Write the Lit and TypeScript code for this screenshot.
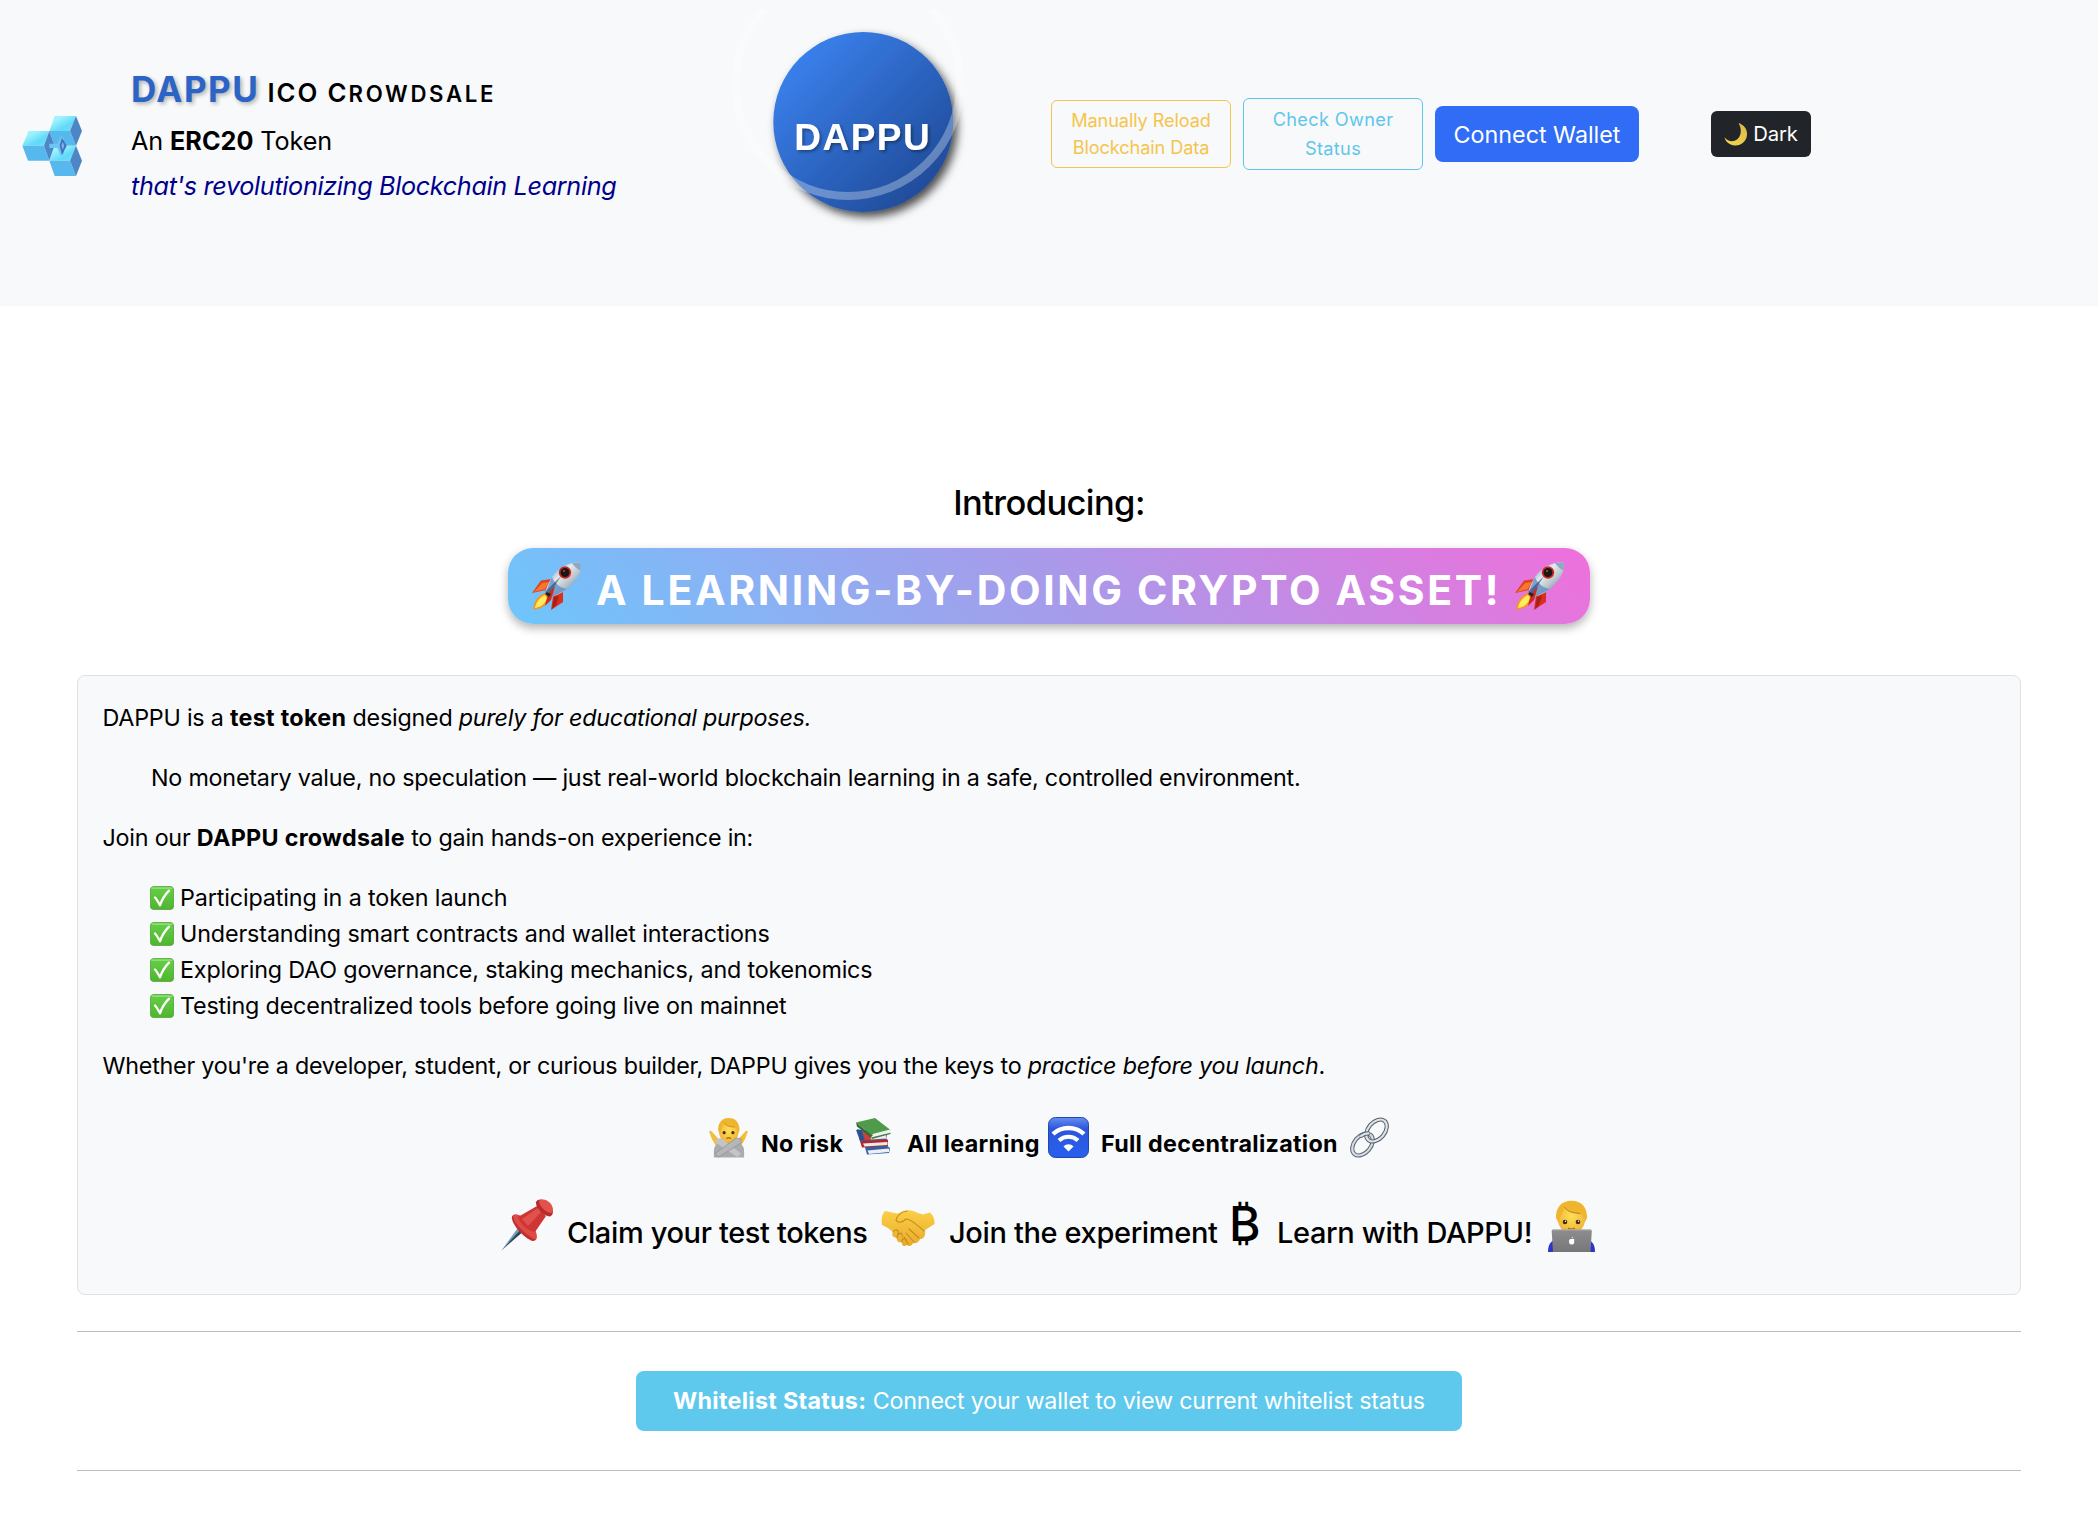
import { LitElement, html, css, svg } from "lit";
import { customElement } from "lit/decorators.js";

const cubes = html`<svg class="cubes" viewBox="36 33 180 180">
  <defs>
    <linearGradient id="face" x1="0" y1="0" x2="1" y2="1"><stop offset="0" stop-color="#8ff0fd"/><stop offset=".25" stop-color="#9ff4fe"/><stop offset=".65" stop-color="#62d9f8"/><stop offset="1" stop-color="#6fe0fb"/></linearGradient>
  </defs>
  <path d="M134 33H198L180 78H118Z" fill="url(#face)"/>
  <path d="M118 78H180L198 122H134Z" fill="#57b8ee"/>
  <path d="M198 33L216 78L198 122L180 78Z" fill="#4c86c6"/>
  <path d="M56 78H118L102 122H37Z" fill="url(#face)"/>
  <path d="M37 122H102L118 167H54Z" fill="#57b8ee"/>
  <path d="M118 78L134 122L118 167L102 122Z" fill="#4c86c6"/>
  <path d="M134 122H198L180 167H118Z" fill="url(#face)"/>
  <path d="M118 167H180L198 213H134Z" fill="#57b8ee"/>
  <path d="M198 122L216 167L198 213L180 167Z" fill="#4c86c6"/>
  <path d="M118 116H142L153 94L162 100V146L153 153L142 129H118Z" fill="#6cc6f2"/>
  <path d="M156 98L170 122L156 150L149 122Z" fill="#4270c0"/>
  <path d="M158 110L163 122L158 134L154 122Z" fill="#7fb0e8"/>
</svg>`;

const coin = html`<svg class="coin" viewBox="732 10 250 230">
  <defs>
    <linearGradient id="coin-fill" x1="0" y1="0" x2="1" y2="1"><stop offset=".1" stop-color="#3b82f0"/><stop offset="1" stop-color="#1b428a"/></linearGradient>
    <filter id="coin-shadow" x="-20%" y="-20%" width="150%" height="150%"><feDropShadow dx="4" dy="5" stdDeviation="5" flood-color="#000" flood-opacity=".7"/></filter>
    <filter id="word-shadow" x="-10%" y="-30%" width="120%" height="170%"><feDropShadow dx="2" dy="2" stdDeviation="1.5" flood-color="#000" flood-opacity=".35"/></filter>
  </defs>
  <circle cx="863.3" cy="122" r="90" fill="url(#coin-fill)" filter="url(#coin-shadow)"/>
  <circle cx="848" cy="84" r="112" fill="none" stroke="#fff" stroke-width="8" opacity=".3"/>
  <text class="coin-word" x="794.3" y="150" filter="url(#word-shadow)">DAPPU</text>
</svg>`;

const moon = html`<svg class="moon" viewBox="0 0 24 24"><defs><linearGradient id="mg" x1="0" y1="1" x2="1" y2="0"><stop offset="0" stop-color="#f9d84f"/><stop offset="1" stop-color="#d9b94a"/></linearGradient></defs>
  <path d="M14.5 1C20 3 23.5 7 23 13C22.5 19.5 17 23.8 11 23.5C6 23 1.500 20 .5 15.500C4 19.500 9 20.300 13 17.500C17.500 14 18 6.500 14.500 1Z" fill="url(#mg)"/></svg>`;

const rocket = html`<svg class="rocket" viewBox="0 0 50 48">
  <defs><linearGradient id="rk" x1="0" y1="0" x2="1" y2="1"><stop offset=".1" stop-color="#5d8fc8"/><stop offset=".4" stop-color="#e6ebee"/><stop offset=".62" stop-color="#b9c2ca"/><stop offset="1" stop-color="#2f5590"/></linearGradient></defs>
  <path d="M19 17L9 18.500L0 31L14 28Z" fill="#e2411f"/><path d="M17 20L10 21L2 30L13 27Z" fill="#f5762e"/>
  <path d="M31 30L31 40L19 48L21 34Z" fill="#d92f1c"/><path d="M27 34L24 43L20 47L22 35Z" fill="#a81f18"/>
  <path d="M14 31C8 32 2 38 1 47.500C9 47 16 43 18 35Z" fill="#f7941d"/><path d="M13 33C8 35 4 40 3 46C9 45 13 42 15 36Z" fill="#ffec5c"/>
  <path d="M49 .8C38 -.5 27 5 20 15C17.500 19 15 24 14 28L20.500 34.500C26 33 32 30 36 26C45 18 50 10 49 .8Z" fill="url(#rk)"/>
  <path d="M20 15L14.500 28L20.500 34.500L35 27C31 27 22 22 20 15Z" fill="#5b8bc4" opacity=".75"/>
  <path d="M29 14L13 30L17 33Z" fill="#2a456f" opacity=".6"/>
  <path d="M40 1.300C42 4 46 8 48.800 8.500L49 .8C46 .2 43 .5 40 1.300Z" fill="#8fa9c4"/>
  <circle cx="33" cy="10.500" r="6.200" fill="#c92a20"/><circle cx="33" cy="10.500" r="4.500" fill="#1a1616"/><circle cx="32" cy="9" r="1.200" fill="#704a46"/>
  <path d="M23 24L19 38L13 44L16 32Z" fill="#cf2a1b"/><path d="M15 30L19 32L17 35L13 32Z" fill="#20242c"/>
</svg>`;

const check = html`<svg class="check" viewBox="0 0 24 24"><defs><linearGradient id="cg" x1="0" y1="0" x2="0" y2="1"><stop offset="0" stop-color="#66cf48"/><stop offset="1" stop-color="#4fb52f"/></linearGradient></defs>
  <rect x=".4" y=".4" width="23.200" height="23.200" rx="3.600" fill="url(#cg)" stroke="#4a9f35" stroke-width=".8"/><path d="M2 2.200H22" stroke="#9be37f" stroke-width="1.200" stroke-linecap="round"/>
  <path d="M5 11.500C6.500 13 8.500 16.500 10 19.300C12 13.500 15 8.500 19 4.600" fill="none" stroke="#fff" stroke-width="2.300" stroke-linecap="round" stroke-linejoin="round"/></svg>`;

const hair = svg`<path d="M5 13C5 5 9 .5 16 .5S27 5 27 13L25 17C25.500 12 23 10 20 9.500C14 9 12 6 11 5C10.500 9 8 11 7 17Z" fill="#efb52f"/><path d="M11 5C13 9 18 9.500 22 9.800" fill="none" stroke="#b47a1a" stroke-width=".7"/>`;

const noRisk = html`<svg class="e40" viewBox="0 0 40 41">
  <defs><radialGradient id="skin" cx=".5" cy=".4" r=".65"><stop offset="0" stop-color="#ffdf55"/><stop offset="1" stop-color="#eeb131"/></radialGradient></defs>
  <path d="M0 14L2 13.500L8 20L11 24L7 29L3 22ZM40 14L38 13.500L32 20L29 24L33 29L37 22Z" fill="#f4bd38"/>
  <path d="M5 41V34C5 29 9 25 14 25H27C32 25 36 29 36 34V41Z" fill="#a9abaf"/>
  <ellipse cx="20.300" cy="15" rx="10" ry="11" fill="url(#skin)"/>
  <g transform="translate(4.300 0)">${hair}</g>
  <circle cx="15.500" cy="15.500" r="1.600" fill="#4a2b16"/><circle cx="24.500" cy="15.500" r="1.600" fill="#4a2b16"/>
  <path d="M18 21.500Q20 20 22.500 21.500" fill="none" stroke="#8a4a1a" stroke-width="1.200"/>
  <path d="M7 22L12 21L33 37L29 40.500L7 26Z" fill="#c2c4c8"/><path d="M33 22L28 21L6 37L10 40.500L33 26Z" fill="#b4b6ba" stroke="#8a8c91" stroke-width=".7"/>
</svg>`;

const books = html`<svg class="books" viewBox="0 0 35 37">
  <path d="M8 26L11 36.500L33 35L34 30L30 27Z" fill="#2e62a8"/><path d="M11.500 32.500L33 30.500V34L13 36Z" fill="#eceef0"/>
  <path d="M3 20L6 29.500L32 28V22L27 19Z" fill="#b3262b"/><path d="M7 25.500L31.500 24V27L8.500 28.500Z" fill="#efe9e4"/>
  <path d="M0 12L4 23L30 22L31 16L25 12Z" fill="#2f5fa6"/><path d="M1 11L5 12L8 22L4.500 22.500Z" fill="#27508f"/><path d="M6 13L9 22L30 21V17L20 18Z" fill="#d83a36"/><path d="M14 18L30 16.500V20.500L15 21.500Z" fill="#eee"/>
  <path d="M0 4.500L19 0L34.500 12L16 17.500Z" fill="#4f9a4b"/><path d="M0 4.500L16 17.500L15 20L1 8.500Z" fill="#326d36"/><path d="M16.500 16L34 11.500V15L17 19.500Z" fill="#f0f1ec"/><path d="M15 19.500L34.500 14.800V16L16 21Z" fill="#3d7e40"/>
</svg>`;

const wifi = html`<svg class="e41" viewBox="0 0 41 41"><defs><linearGradient id="wg" x1="0" y1="0" x2="0" y2="1"><stop offset="0" stop-color="#6590ef"/><stop offset=".28" stop-color="#2d55dc"/><stop offset="1" stop-color="#2760ee"/></linearGradient></defs>
  <rect x=".5" y=".5" width="40" height="40" rx="7" fill="url(#wg)" stroke="#2347a8"/>
  <path d="M5 17C13.500 9 27.500 9 36 17" fill="none" stroke="#fff" stroke-width="4.400"/>
  <path d="M11 23.500C16.500 18.500 24.500 18.500 30 23.500" fill="none" stroke="#fff" stroke-width="4.200"/>
  <path d="M15.500 29.500C18.500 26.500 22.500 26.500 25.500 29.500L20.500 34.500Z" fill="#fff"/></svg>`;

const link = html`<svg class="e41" viewBox="0 0 41 41">
  <g fill="none" stroke-linecap="round">
  <g transform="rotate(40 13.500 27.500)"><ellipse cx="13.500" cy="27.500" rx="8.300" ry="12.500" stroke="#5b6672" stroke-width="4.200"/><ellipse cx="13.500" cy="27.500" rx="8.300" ry="12.500" stroke="#d5dbe1" stroke-width="2.200"/></g>
  <g transform="rotate(40 27.500 13.500)"><ellipse cx="27.500" cy="13.500" rx="8.300" ry="12.500" stroke="#56606b" stroke-width="4.200"/><ellipse cx="27.500" cy="13.500" rx="8.300" ry="12.500" stroke="#dfe4e9" stroke-width="2.200"/></g>
  <path d="M12.500 18.500C14.500 17 17 16.200 19 16.300" stroke="#5b6672" stroke-width="4.200"/><path d="M12 18.800C14.500 17 17 16.200 19.500 16.300" stroke="#dfe4e9" stroke-width="2.200"/></g></svg>`;

const pin = html`<svg class="pin" viewBox="0 0 52 52">
  <path d="M22 29L.5 51.500L19 26Z" fill="#6f9cc4"/><path d="M21 29L.5 51.500L24 31Z" fill="#2f4454"/>
  <path d="M11 20C10 16 14 14 19 17L33 32C37 37 36 42 32 42C26 41 13 29 11 20Z" fill="#c22f2f"/>
  <path d="M12 17C16 13 25 19 30 25C35 31 37 36 35 41C28 38 13 26 12 17Z" fill="#de4a45"/>
  <path d="M17 18L36 7L45 17L34 33C27 32 19 25 17 18Z" fill="#cf3532"/><path d="M21 20L37 9L41 12L27 27Z" fill="#e86660" opacity=".6"/>
  <path d="M35 3C37 -1 44 0 48 5C53 10 53 16 49 17.500C44 18 34 9 35 3Z" fill="#b92b2b"/><path d="M38 2C41 -1 47 1 50 5C53 10 52 13 50 14C45 14 38 7 38 2Z" fill="#e2514b"/>
</svg>`;

const shake = html`<svg class="shake" viewBox="0 0 54 37"><defs><linearGradient id="sg" x1="0" y1="0" x2="0" y2="1"><stop offset="0" stop-color="#fbcf45"/><stop offset="1" stop-color="#e9ab2c"/></linearGradient></defs>
  <path d="M4 1L16 3.500C19 3 22 0 26 .5C32 -.5 37 4 42 4.500L49 2.500C52 5 54 9 53.500 14L44 20C45 25 43 29 39 29C38 32 35 34 32 33C31 36 28 37 26 35C23 37.500 20 35 21 32C18 33 15 31 16 28C12 28 10 25 12 22C9 19 6 17 1 15C0 9 1 4 4 1Z" fill="url(#sg)"/>
  <g fill="none" stroke="#c78a1f" stroke-width="1.100" stroke-linecap="round"><path d="M26 1C20 2 16 6 15 10C17 14 22 12 25 9C31 9 38 17 43 21"/><path d="M28 19L38 28M25 23L33 32M23 27L27 34"/><path d="M12 22C13 20 16 19 17 21C18 23 16 26 16 28M17 25C19 22 22 23 21 26M21 32C20 29 25 27 25 30"/></g>
</svg>`;

const coder = html`<svg class="coder" viewBox="0 0 47 52"><defs><linearGradient id="lg" x1="0" y1="0" x2="0" y2="1"><stop offset="0" stop-color="#8d8d8f"/><stop offset="1" stop-color="#77777a"/></linearGradient></defs>
  <path d="M0 52C0 44 3 40 10 39H37C44 40 47 44 47 52Z" fill="#2b36c9"/>
  <ellipse cx="23.500" cy="19" rx="13.500" ry="15" fill="url(#skin)"/>
  <g transform="translate(.8 0) scale(1.420 1.370)">${hair}</g>
  <circle cx="17" cy="22" r="2.300" fill="#4a2b16"/><circle cx="30" cy="22" r="2.300" fill="#4a2b16"/><circle cx="17.500" cy="21.300" r=".7" fill="#fff"/><circle cx="30.500" cy="21.300" r=".7" fill="#fff"/>
  <path d="M20 28Q23.500 30 27 28" fill="none" stroke="#a8621c" stroke-width="1.200"/>
  <path d="M5 29.500H42.500Q43.800 29.500 43.800 31L42.500 52H5L3.700 31Q3.700 29.500 5 29.500Z" fill="url(#lg)"/>
  <path d="M4.500 30H43" stroke="#b5b5b7" stroke-width=".8"/><path d="M24 39C26 38 27 39.500 26 41C27 43.500 25 45 23.600 44.300C21.500 45 20.500 42 21.300 40C22 38.700 23 38.800 24 39ZM23.600 38.300Q23.600 37 25 36.500Q25 38 23.600 38.300Z" fill="#fff"/>
</svg>`;

const benefits = [
  "Participating in a token launch",
  "Understanding smart contracts and wallet interactions",
  "Exploring DAO governance, staking mechanics, and tokenomics",
  "Testing decentralized tools before going live on mainnet",
];

@customElement("app-root")
export class AppRoot extends LitElement {
  static styles = css`
    :host { display: block; min-height: 1538px; background: #fff; color: #000; font-family: Inter, "Liberation Sans", sans-serif; font-size: 23.3px; line-height: 36px; }
    * { box-sizing: border-box; }
    svg { display: block; flex: none; overflow: hidden; }
    span { white-space: pre; }
    b { font-weight: 700; letter-spacing: .3px; }
    .header { display: flex; align-items: flex-start; height: 306px; padding-left: 22px; background: #f8f9fb; }
    .cubes { width: 60px; height: 60px; margin-top: 116px; }
    .intro { width: 601px; margin: 67px 0 0 49px; display: flex; flex-direction: column; }
    .intro div { height: 45px; line-height: 45px; font-size: 25.2px; }
    .intro .title { height: 52px; line-height: 44px; display: flex; align-items: baseline; font-weight: 700; }
    .brand { font-size: 35px; color: #2b64c6; text-shadow: 2px 2px 4px rgba(0,0,0,.3); width: 136.5px; letter-spacing: 1.5px; }
    .ico { font-size: 25.8px; font-weight: 600; letter-spacing: 1.9px; }
    .sc { font-size: 22.2px; font-weight: 600; letter-spacing: 2.7px; }
    .intro .token { letter-spacing: -.1px; }
    .intro .token b { letter-spacing: 0; }
    .intro .tag { color: #00008b; font-style: italic; letter-spacing: -.33px; }
    .coin { width: 250px; height: 230px; margin-top: 10px; }
    .coin-word { font: 700 37px "Liberation Sans", sans-serif; letter-spacing: 1.45px; fill: #fff; }
    .actions { display: flex; align-items: center; margin: 98px 0 0 69px; height: 72px; }
    .btn { display: flex; flex-direction: column; align-items: center; justify-content: center; border-radius: 6px; white-space: nowrap; }
    .reload { width: 180px; height: 68px; border: 1px solid #f5c54b; color: #f5c54b; font-size: 18.2px; line-height: 27px; letter-spacing: -.12px; }
    .owner { width: 180px; height: 72px; margin-left: 12px; border: 1px solid #5fc6ea; color: #5fc6ea; font-size: 18.2px; line-height: 29px; letter-spacing: .33px; }
    .connect { width: 204px; height: 56px; margin-left: 12px; padding-top: 1px; border-radius: 8px; background: #306cf5; color: #fff; }
    .dark { width: 100px; height: 46px; margin-left: 72px; background: #212529; color: #fff; flex-direction: row; font-size: 20.3px; letter-spacing: -.1px; gap: 5px; }
    .moon { width: 24px; height: 24px; }
    .main { padding: 0 77px; }
    .lead { margin-top: 172px; height: 50px; line-height: 50px; text-align: center; font-size: 34.5px; font-weight: 500; letter-spacing: -.6px; }
    .banner { display: flex; align-items: center; width: 1082px; height: 76px; margin: 20px auto 0; padding: 0 25px 0 24px; border-radius: 25px; background: linear-gradient(45deg, #6ec6fc, #a79bea 50%, #f06fdb); box-shadow: 0 4px 10px rgba(0,0,0,.3); color: #fff; font-size: 41px; font-weight: 700; line-height: 76px; letter-spacing: 2.65px; }
    .banner span { width: 933px; padding-left: 14px; padding-top: 8px; }
    .rocket { width: 50px; height: 48px; }
    .card { margin-top: 51px; height: 620px; padding: 24px 24.5px 0; border: 1px solid #dfe1e4; border-radius: 8px; background: #f8f9fb; }
    .p { height: 36px; margin-bottom: 24px; letter-spacing: -.22px; }
    .in { padding-left: 48.5px; }
    .list { display: flex; flex-direction: column; margin-bottom: 24px; letter-spacing: -.12px; }
    .item { display: flex; align-items: center; height: 36px; padding-left: 47.5px; gap: 6px; }
    .item:nth-child(3), .item:nth-child(4) { letter-spacing: -.17px; }
    .check { width: 24px; height: 24px; }
    .row { display: grid; align-items: start; }
    .motto { margin-left: 606.5px; height: 80px; padding-top: 9px; grid-template-columns: 52px 95px 51px 141px 53px 248px 41px; font-weight: 700; letter-spacing: .3px; }
    .motto span { margin-top: 9px; }
    .e40 { width: 39px; height: 41px; }
    .e41 { width: 41px; height: 41px; }
    .books { width: 35px; height: 37px; margin-top: 1px; }
    .cta { margin-left: 398.5px; padding-top: 11px; grid-template-columns: 66px 314px 68px 281px 47px 271px 47px; font-size: 29px; font-weight: 500; line-height: 40px; letter-spacing: -.36px; }
    .cta span { margin-top: 14px; }
    .pin { width: 52px; height: 52px; }
    .shake { width: 54px; height: 37px; margin-top: 11px; }
    .coder { width: 47px; height: 52px; margin-top: 1px; }
    .cta .btc { font-size: 48px; line-height: 52px; margin-top: -1px; margin-left: -1px; }
    .rule { height: 1px; background: #bbbcbe; margin-top: 36px; }
    .alert { width: 826px; height: 60px; margin: 39px auto; border-radius: 8px; background: #5ec8ed; color: #fff; line-height: 60px; padding-left: 37px; letter-spacing: -.19px; }
    .alert + .rule { margin-top: 0; }
  `;
  render() {
    return html`
      <div class="header">
        ${cubes}
        <div class="intro">
          <div class="title"><span class="brand">DAPPU</span><span class="ico">ICO C</span><span class="sc">ROWDSALE</span></div>
          <div class="token"><span>An <b>ERC20</b> Token</span></div>
          <div class="tag"><span>that's revolutionizing Blockchain Learning</span></div>
        </div>
        ${coin}
        <div class="actions">
          <div class="btn reload"><span>Manually Reload</span><span>Blockchain Data</span></div>
          <div class="btn owner"><span>Check Owner</span><span>Status</span></div>
          <div class="btn connect"><span>Connect Wallet</span></div>
          <div class="btn dark">${moon}<span>Dark</span></div>
        </div>
      </div>
      <div class="main">
        <div class="lead"><span>Introducing:</span></div>
        <div class="banner">${rocket}<span>A LEARNING-BY-DOING CRYPTO ASSET!</span>${rocket}</div>
        <div class="card">
          <div class="p"><span>DAPPU is a <b>test token</b> designed <i>purely for educational purposes.</i></span></div>
          <div class="p in"><span>No monetary value, no speculation — just real-world blockchain learning in a safe, controlled environment.</span></div>
          <div class="p"><span>Join our <b>DAPPU crowdsale</b> to gain hands-on experience in:</span></div>
          <div class="list">
            ${benefits.map((t) => html`<div class="item">${check}<span>${t}</span></div>`)}
          </div>
          <div class="p"><span>Whether you're a developer, student, or curious builder, DAPPU gives you the keys to <i>practice before you launch</i>.</span></div>
          <div class="row motto">${noRisk}<span>No risk</span>${books}<span>All learning</span>${wifi}<span>Full decentralization</span>${link}</div>
          <div class="row cta">${pin}<span>Claim your test tokens</span>${shake}<span>Join the experiment</span><span class="btc">₿</span><span>Learn with DAPPU!</span>${coder}</div>
        </div>
        <div class="rule"></div>
        <div class="alert"><span><b>Whitelist Status:</b> Connect your wallet to view current whitelist status</span></div>
        <div class="rule"></div>
      </div>`;
  }
}
